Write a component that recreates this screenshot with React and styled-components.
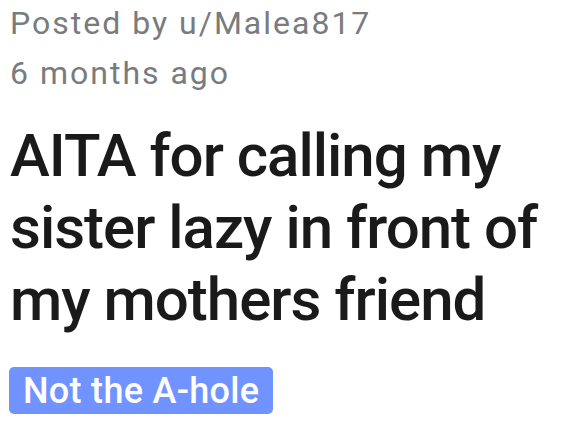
import React from "react";
import styled, { createGlobalStyle } from "styled-components";

const GlobalStyle = createGlobalStyle`
	body {
		margin: 0;
		background: #ffffff;
		font-family: Roboto, "Noto Sans", sans-serif;
	}
`;

const Post = styled.article`
	display: flex;
	flex-direction: column;
	align-items: flex-start;
	padding: 0 10px;
`;

const Meta = styled.div`
	color: #787c7e;
	font-size: 32px;
	letter-spacing: 2px;
	line-height: 50px;
	margin-top: -2px;
`;

const Title = styled.h1`
	margin: 22px 0 0;
	color: #1a1a1b;
	font-size: 60px;
	font-weight: 500;
	letter-spacing: -1px;
	line-height: 72px;
`;

const Flair = styled.span`
	margin: 31px 0 0 -1px;
	display: inline-flex;
	align-items: center;
	height: 47px;
	padding: 0 14px;
	border-radius: 5px;
	background: ${props => props.color};
	color: #ffffff;
	font-size: 36px;
	font-weight: 500;
	letter-spacing: 0.3px;
`;

export default function App() {
	return (
		<>
			<GlobalStyle />
			<Post>
				<Meta>
					Posted by u/Malea817
					<br />6 months ago
				</Meta>
				<Title>AITA for calling my sister lazy in front of my mothers friend</Title>
				<Flair color="#7193ff">Not the A-hole</Flair>
			</Post>
		</>
	);
}
